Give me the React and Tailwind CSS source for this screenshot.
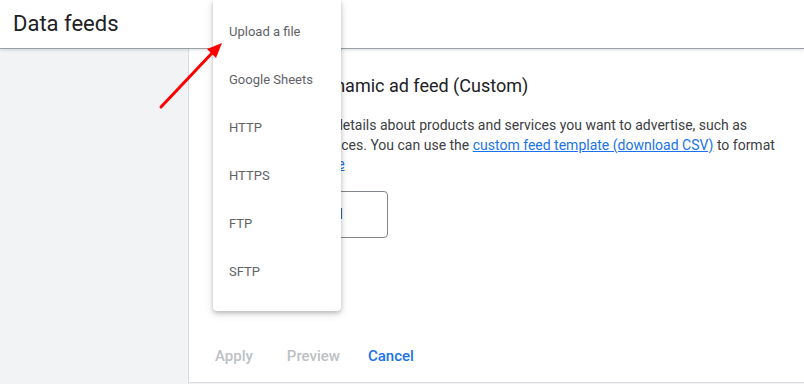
import React from "react";

const sources = ["Upload a file", "Google Sheets", "HTTP", "HTTPS", "FTP", "SFTP"];

const App = () => {
  return (
    <div className="relative w-[804px] h-[384px] overflow-hidden bg-[#f1f3f4] font-['Roboto',sans-serif]">
      {/* Top bar */}
      <header className="relative z-10 h-[49px] bg-white border-b border-[#9aa0a6] shadow-[0_1px_3px_rgba(60,64,67,0.18)] flex items-center pl-[13px]">
        <h1 className="text-[22px] text-[#202124] leading-none">Data feeds</h1>
      </header>

      <div className="flex h-[335px]">
        {/* Sidebar */}
        <aside className="w-[189px] shrink-0 border-r border-[#dadce0]" />

        {/* Feed panel */}
        <main className="flex-1 flex flex-col bg-white h-[334px] border-b border-[#dadce0]">
          <div className="pl-[54.7px] pt-[25px]">
            <h2 className="text-[18px] leading-[24px] text-[#202124]">
              Create a Dynamic ad feed (Custom)
            </h2>
            <p className="mt-[18px] text-[14px] leading-[19.5px] text-[#3c4043]">
              Add a file with details about products and services you want to advertise, such as
              <br />
              item IDs and prices. You can use the{" "}
              <a href="#" className="text-[#1a73e8] underline">
                custom feed template (download CSV)
              </a>{" "}
              to format
              <br />
              this.{" "}
              <a href="#" className="text-[#1a73e8] underline">
                Learn more
              </a>
            </p>
            <button className="mt-[16px] w-[144px] h-[47px] rounded-[4px] border border-[#80868b] flex items-center justify-end pr-[44px] text-[14px] font-medium text-[#3c4043]">
              Upload
            </button>
          </div>

          <div className="flex-1" />

          <div className="flex items-center h-[36px] mb-[8px] pl-[26px] text-[15px] font-medium">
            <button className="text-[#bdc1c6]">Apply</button>
            <button className="ml-[34px] text-[#bdc1c6]">Preview</button>
            <button className="ml-[28px] text-[#1a73e8]">Cancel</button>
          </div>
        </main>
      </div>

      {/* Source menu */}
      <ul className="absolute z-20 left-[213px] top-0 w-[128px] bg-white rounded-b-[4px] pt-[8px] pb-[15px] shadow-[0_2px_4px_rgba(0,0,0,0.2),0_3px_10px_rgba(0,0,0,0.12)]">
        {sources.map((s) => (
          <li key={s} className="h-[48px] flex items-center pl-[16px] text-[13px] text-[#5f6368]">
            {s}
          </li>
        ))}
      </ul>

      {/* Annotation arrow */}
      <svg className="absolute z-30 left-0 top-0 pointer-events-none" width="804" height="384">
        <line x1="161" y1="107" x2="213" y2="52" stroke="#ff0000" strokeWidth="3" strokeLinecap="round" />
        <polygon points="222,43 216,58 207,49" fill="#ff0000" />
      </svg>
    </div>
  );
};

export default App;
